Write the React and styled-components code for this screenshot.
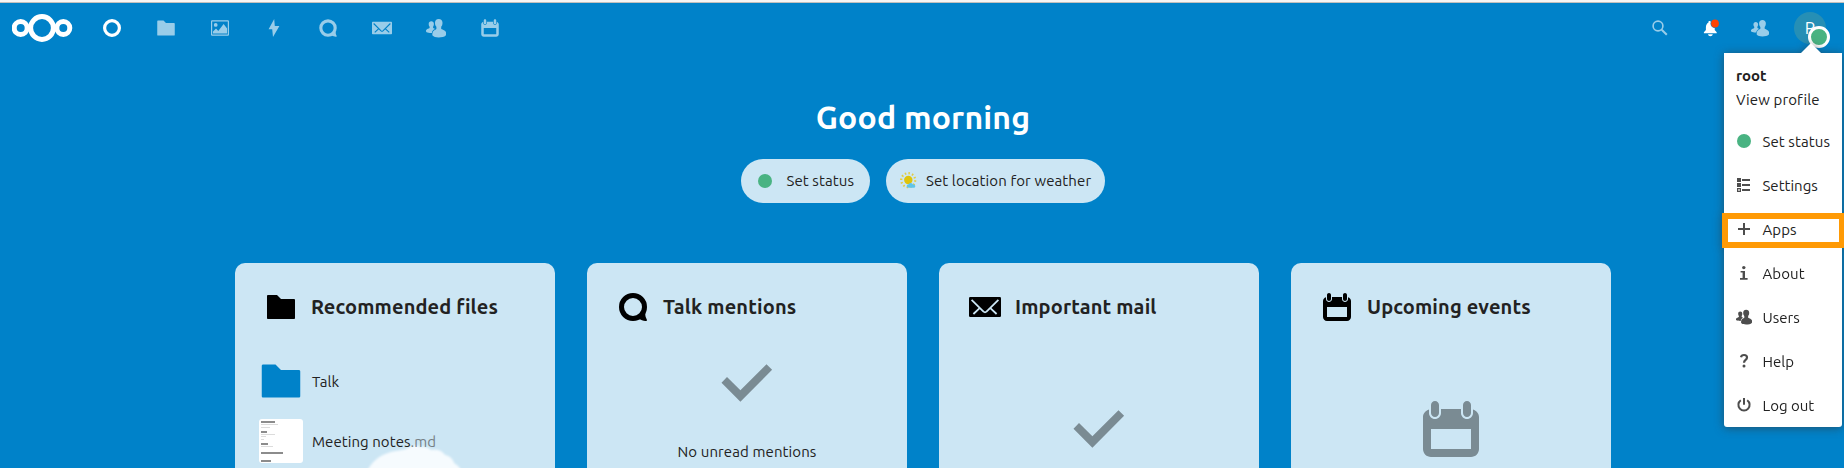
import React from 'react';
import styled, { createGlobalStyle } from 'styled-components';

const GlobalStyle = createGlobalStyle`
  * { box-sizing: border-box; }
  html, body { margin: 0; padding: 0; overflow: hidden; background: #0082c9; }
  body { font-family: "Ubuntu", "Noto Sans", "Open Sans", sans-serif; font-size: 15px; color: #222; }
  svg { display: block; flex: none; }
`;

const Page = styled.div`
  position: relative;
  display: flex;
  flex-direction: column;
  height: 468px;
  overflow: hidden;
  background: #0082c9;
  border-top: 2px solid #f6f5f4;
`;

const Header = styled.header`
  display: flex;
  align-items: center;
  flex: none;
  height: 51px;
  padding: 0 18px 0 12px;
  border-top: 1px solid #c3c0bd;
`;

const AppList = styled.nav`
  display: flex;
  margin-left: 11px;
`;

const AppItem = styled.a`
  display: flex;
  align-items: center;
  justify-content: center;
  width: 54px;
  height: 50px;
  color: #fff;
  opacity: ${(p) => (p.$active ? 1 : 0.6)};
`;

const HeaderTools = styled.div`
  display: flex;
  align-items: center;
  margin-left: auto;
`;

const ToolButton = styled.a`
  display: flex;
  align-items: center;
  justify-content: center;
  width: 50px;
  height: 50px;
  color: #fff;
  opacity: ${(p) => (p.$bright ? 1 : 0.6)};
`;

const Avatar = styled.div`
  position: relative;
  display: flex;
  align-items: center;
  justify-content: center;
  width: 32px;
  height: 32px;
  margin-left: 9px;
  border-radius: 50%;
  background: #268fb5;
  color: #fff;
  font-size: 17px;
  line-height: 32px;
`;

const AvatarStatus = styled.span`
  position: absolute;
  right: -4px;
  bottom: -4px;
  width: 22px;
  height: 22px;
  border: 3px solid #fff;
  border-radius: 50%;
  background: #49b382;
`;

const Greeting = styled.h1`
  margin: 42px 0 0;
  padding-left: 2px;
  text-align: center;
  font-size: 32px;
  line-height: 44px;
  font-weight: 700;
  letter-spacing: 0.15px;
  color: #fff;
`;

const PillRow = styled.div`
  display: flex;
  justify-content: center;
  gap: 16px;
  margin-top: 20px;
  padding-left: 2px;
`;

const Pill = styled.button`
  display: flex;
  align-items: center;
  width: ${(p) => p.$width}px;
  height: 44px;
  padding: 0 0 1px ${(p) => p.$inset}px;
  gap: ${(p) => p.$gap}px;
  border: 0;
  border-radius: 22px;
  background: #cce6f4;
  color: #222;
  font-family: inherit;
  font-size: 15px;
  white-space: nowrap;
`;

const Dot = styled.span`
  flex: none;
  width: 14px;
  height: 14px;
  border-radius: 50%;
  background: #49b382;
`;

const Label = styled.span`
  letter-spacing: ${(p) => p.$track ?? 0.1}px;
  white-space: nowrap;
`;

const Panels = styled.main`
  display: flex;
  justify-content: center;
  gap: 32px;
  margin-top: 60px;
  padding-left: 2px;
`;

const Panel = styled.section`
  position: relative;
  flex: none;
  width: 320px;
  height: 420px;
  border-radius: 10px;
  background: #cce6f4;
`;

const PanelHeading = styled.h2`
  display: flex;
  align-items: center;
  gap: 14px;
  height: 32px;
  margin: 28px 0 0 30px;
  font-size: 20px;
  line-height: 30px;
  font-weight: 700;
  svg { color: #000; }
`;

const FileRow = styled.div`
  position: relative;
  display: flex;
  align-items: center;
  gap: 8px;
  height: 60px;
  padding-left: 24px;
`;

const FileList = styled.div`
  margin-top: 28px;
`;

const FileIcon = styled.span`
  display: flex;
  align-items: center;
  width: 45px;
  height: 44px;
`;

const Extension = styled.span`
  color: #767f84;
`;

const Preview = styled.span`
  display: flex;
  flex-direction: column;
  width: 44px;
  height: 44px;
  margin-right: 1px;
  padding: 2px;
  overflow: hidden;
  border-radius: 3px;
  background: #fff;
`;

const PreviewLine = styled.i`
  flex: none;
  width: ${(p) => p.$w}px;
  height: ${(p) => (p.$strong ? 2 : 1)}px;
  margin-top: ${(p) => p.$top}px;
  background: ${(p) => (p.$strong ? '#8c8c8c' : '#dcdcdc')};
`;

const Cloud = styled.svg`
  position: absolute;
  left: 124px;
  top: 178px;
`;

const EmptyState = styled.div`
  display: flex;
  flex-direction: column;
  align-items: center;
  margin-top: ${(p) => p.$top}px;
  color: #222;
`;

const EmptyText = styled.p`
  margin: 39px 0 0;
  line-height: 22px;
`;

const MutedIcon = styled.span`
  color: #7a8b93;
`;

const Menu = styled.aside`
  position: absolute;
  top: 51px;
  right: 2px;
  width: 118px;
  height: 374px;
  border-radius: 0 0 3px 3px;
  background: #fff;
  filter: drop-shadow(0 1px 5px rgba(50, 50, 50, 0.6));
  &::before {
    content: '';
    position: absolute;
    top: -10px;
    right: 21px;
    border: 10.5px solid transparent;
    border-top: 0;
    border-bottom-color: #fff;
  }
`;

const MenuUser = styled.div`
  display: flex;
  flex-direction: column;
  height: 66px;
  padding: 11px 0 0 12px;
  line-height: 24px;
`;

const MenuItem = styled.a`
  position: relative;
  display: flex;
  align-items: center;
  gap: 10.5px;
  height: 44px;
  padding-left: 12px;
`;

const MenuIcon = styled.span`
  display: flex;
  align-items: center;
  justify-content: center;
  width: 16px;
  height: 16px;
  color: #4d4d4d;
`;

const Highlight = styled.span`
  position: absolute;
  left: -2px;
  right: -2px;
  top: 6px;
  height: 35px;
  border: 6px solid #ff9a05;
  border-right-width: 5px;
`;

const Logo = () => (
  <svg width="62" height="30" viewBox="0 0 62 30" fill="none" stroke="#fff">
    <circle cx="30" cy="15" r="11.4" strokeWidth="5" />
    <circle cx="8.7" cy="15" r="6.5" strokeWidth="5" />
    <circle cx="51.3" cy="15" r="6.5" strokeWidth="5" />
  </svg>
);

const RingIcon = () => (
  <svg width="20" height="20" viewBox="0 0 20 20" fill="none" stroke="currentColor" strokeWidth="3.2">
    <circle cx="10" cy="10" r="7.4" />
  </svg>
);

const FolderIcon = ({ size, color = 'currentColor' }) => (
  <svg width={size} height={size} viewBox="0 0 32 32" fill={color}>
    <path d="m3 4c-.5 0-1 .5-1 1v22c0 .52.48 1 1 1h26c.52 0 1-.48 1-1v-18c0-.5-.5-1-1-1h-13l-4-4z" />
  </svg>
);

const PictureIcon = () => (
  <svg width="20" height="20" viewBox="0 0 20 20">
    <rect x="1.6" y="2.9" width="16.8" height="14.3" rx=".5" fill="none" stroke="currentColor" strokeWidth="1.2" />
    <circle cx="5.7" cy="6.9" r="1.9" fill="currentColor" />
    <path d="M3 15.6v-2l3-3 2.3 2.4L13.6 6l3.5 4.4v5.2z" fill="currentColor" />
  </svg>
);

const BoltIcon = () => (
  <svg width="20" height="20" viewBox="0 0 20 20" fill="currentColor">
    <path d="M10.2 1 4.6 11.3h3.6L9 19l6.4-11h-4.6z" />
  </svg>
);

const TalkIcon = ({ size }) => (
  <svg width={size} height={size} viewBox="0 0 16 16">
    <circle cx="8" cy="8" r="5.75" fill="none" stroke="currentColor" strokeWidth="2.5" />
    <path d="M14.2 10.8c-.2 1.5.1 2.4.7 3.4.2.6-.1.9-.7.8-1.2-.1-2.2-.6-3.4-1z" fill="currentColor" />
  </svg>
);

const MailIcon = ({ size, cut }) => (
  <svg width={size} height={size} viewBox="0 0 32 32">
    <rect y="6" width="32" height="20" rx="1.2" fill="currentColor" />
    <path d="M2.6 8.8 14.5 20.6q1.5 1.2 3 0L29.4 8.8M4.4 23l6-5.6M27.6 23l-6-5.6" fill="none" stroke={cut} strokeWidth="1.8" />
  </svg>
);

const ContactsIcon = ({ size }) => (
  <svg width={size} height={size} viewBox="0 0 20 20" fill="currentColor">
    <path d="M5.3 3.2c1.6 0 2.6 1.1 2.6 2.7 0 1.3-.3 2-.8 2.7v1.5c.7.4 1.4.6 2 .9-1.9.7-3 1.8-3.2 4-2 .1-4.2-.2-5.3-.8-.8-.4-.8-1.7-.3-2.3.7-.9 2.3-1.3 3.3-1.9V8.6c-.6-.7-.9-1.4-.9-2.7 0-1.6 1-2.7 2.6-2.7z" />
    <path d="M12.7 1c2.3 0 3.8 1.5 3.8 3.8 0 1.9-.5 3.1-1.3 4v2.1c1.6.8 4.2 1.5 4.7 3.2.3 1.2.3 2.6-.2 3.4-1.3 1.4-4.2 1.9-7 1.9-3 0-5-.4-6.2-1.8-.4-1.2-.1-2.7.3-3.7.7-1.5 2.4-2.1 3.6-3V8.8c-.9-.9-1.4-2.1-1.4-4C9 2.5 10.4 1 12.7 1z" />
  </svg>
);

const CalendarIcon = ({ size }) => (
  <svg width={size} height={size} viewBox="0 0 16 16" fill="currentColor">
    <path d="M4 1c-.55 0-1 .45-1 1v2c0 .55.45 1 1 1s1-.45 1-1V2c0-.55-.45-1-1-1zm8 0c-.55 0-1 .45-1 1v2c0 .55.45 1 1 1s1-.45 1-1V2c0-.55-.45-1-1-1zM5.5 3v1c0 .83-.67 1.5-1.5 1.5S2.5 4.83 2.5 4v-.9C1.6 3.4 1 4.1 1 5v8c0 1.1.9 2 2 2h10c1.1 0 2-.9 2-2V5c0-.9-.6-1.6-1.5-1.9V4c0 .83-.67 1.5-1.5 1.5s-1.5-.67-1.5-1.5V3zM3 8h10v5H3z" fillRule="evenodd" />
  </svg>
);

const SearchIcon = () => (
  <svg width="18" height="18" viewBox="0 0 18 18" fill="none" stroke="currentColor" strokeWidth="1.6">
    <circle cx="7" cy="7" r="4.9" />
    <path d="M10.7 10.7 15.8 15.7" strokeWidth="2" />
  </svg>
);

const BellIcon = () => (
  <svg width="20" height="20" viewBox="0 0 20 20">
    <path d="M9.5 3c.9 0 1.5.6 1.5 1.4 2.5.7 3.7 2.6 3.7 5.1v2.6l2 2.2v.9H3.9v-.9l2-2.2V9.5c0-2.5 1-4.4 2.6-5.1C8.4 3.5 8.7 3 9.5 3zM8 16.3h4.8c-.2 1.3-1.2 2-2.4 2s-2.2-.7-2.4-2z" fill="#fff" />
    <circle cx="15" cy="5.5" r="4.5" fill="#0082c9" />
    <circle cx="15" cy="5.5" r="3.9" fill="#ff4402" />
  </svg>
);

const WeatherIcon = () => (
  <svg width="17" height="17" viewBox="0 0 17 17">
    <circle cx="8.2" cy="8.2" r="7" fill="none" stroke="#e2cc42" strokeWidth="2.2" strokeDasharray="1.5 2.165" />
    <circle cx="8.3" cy="8" r="4.2" fill="#dfc40c" />
    <path d="M8.700 15.700c-1.400 0-1.900-.7-1.900-1.600 0-1 .7-1.600 1.600-1.500.4-1.200 1.300-1.700 2.200-1.700 1 0 1.800.6 2.100 1.400 1.500-.1 2.500.7 2.600 1.900 0 .9-.6 1.500-1.600 1.500z" fill="#5fc4ea" />
  </svg>
);

const CheckIcon = () => (
  <svg width="52" height="38" viewBox="0 0 52 38" fill="#7a8b93">
    <path d="M.5 18.7 6 13.1l13.4 13.2L45.5.3l5.6 5.4-31.7 32z" />
  </svg>
);

const SettingsIcon = () => (
  <svg width="16" height="16" viewBox="0 0 16 16" fill="currentColor">
    <path d="M1 1h4v4H1zM6 2h8v2H6zM1 6h4v4H1zM6 7h8v2H6zM1 11h4v4H1zM2.2 12.2v1.6h1.6v-1.6zM6 12h8v2H6z" fillRule="evenodd" />
  </svg>
);

const PlusIcon = () => (
  <svg width="16" height="16" viewBox="0 0 16 16" fill="currentColor">
    <path d="M7 2h2v5h5v2H9v5H7V9H2V7h5z" />
  </svg>
);

const InfoIcon = () => (
  <svg width="16" height="16" viewBox="0 0 16 16" fill="currentColor">
    <circle cx="7.8" cy="2.6" r="1.7" />
    <path d="M4.6 6H9v7h2.6v1.8H4V13h2.6V7.6h-2z" />
  </svg>
);

const HelpIcon = () => (
  <svg width="16" height="16" viewBox="0 0 16 16">
    <path d="M5 4.3C5.3 2.7 6.5 2 8 2c1.8 0 3 .9 3 2.5 0 2.5-3 2.3-3 5.2" fill="none" stroke="currentColor" strokeWidth="2.2" />
    <circle cx="8" cy="13" r="1.5" fill="currentColor" />
  </svg>
);

const PowerIcon = () => (
  <svg width="16" height="16" viewBox="0 0 16 16" fill="none" stroke="currentColor" strokeWidth="2">
    <path d="M4.8 3.3a5.6 5.6 0 1 0 6.4 0M8 1v6.8" />
  </svg>
);

const apps = [
  { id: 'dashboard', icon: <RingIcon />, active: true },
  { id: 'files', icon: <FolderIcon size={20} /> },
  { id: 'photos', icon: <PictureIcon /> },
  { id: 'activity', icon: <BoltIcon /> },
  { id: 'talk', icon: <TalkIcon size={20} /> },
  { id: 'mail', icon: <MailIcon size={20} cut="#0082c9" /> },
  { id: 'contacts', icon: <ContactsIcon size={20} /> },
  { id: 'calendar', icon: <CalendarIcon size={20} /> },
];

const menuItems = [
  { label: 'Set status', icon: <Dot /> },
  { label: 'Settings', icon: <SettingsIcon />, track: 0 },
  { label: 'Apps', icon: <PlusIcon /> },
  { label: 'About', icon: <InfoIcon /> },
  { label: 'Users', icon: <ContactsIcon size={16} />, track: 0 },
  { label: 'Help', icon: <HelpIcon />, track: 0 },
  { label: 'Log out', icon: <PowerIcon />, track: 0 },
];

const previewLines = [
  [14, 0, true], [17, 1], [9, 2], [6, 3, true], [14, 1], [5, 1], [3, 2],
  [7, 3, true], [12, 1], [22, 5, true], [10, 6, true],
];

export default function App() {
  return (
    <Page>
      <GlobalStyle />
      <Header>
        <Logo />
        <AppList>
          {apps.map((a) => (
            <AppItem key={a.id} $active={a.active}>{a.icon}</AppItem>
          ))}
        </AppList>
        <HeaderTools>
          <ToolButton><SearchIcon /></ToolButton>
          <ToolButton $bright><BellIcon /></ToolButton>
          <ToolButton><ContactsIcon size={18} /></ToolButton>
          <Avatar>R<AvatarStatus /></Avatar>
        </HeaderTools>
      </Header>

      <Greeting>Good morning</Greeting>
      <PillRow>
        <Pill $width={129} $inset={17} $gap={14.5}>
          <Dot />
          <Label>Set status</Label>
        </Pill>
        <Pill $width={219} $inset={14} $gap={9}>
          <WeatherIcon />
          <Label>Set location for weather</Label>
        </Pill>
      </PillRow>

      <Panels>
        <Panel>
          <PanelHeading>
            <FolderIcon size={32} />
            <Label $track={0.13}>Recommended files</Label>
          </PanelHeading>
          <Cloud width="110" height="60" viewBox="0 0 110 60">
            <defs>
              <filter id="soft"><feGaussianBlur stdDeviation="0.9" /></filter>
            </defs>
            <path d="M7 32C12 22 19 15 29 12c7-3 13-2 18-4 5-3 9-5 14-2 5-1 9 1 11 3 6-1 11 0 14 5 5 1 8 4 9 8 5 3 8 7 9 12v24H7z" fill="#f6fbfe" filter="url(#soft)" />
          </Cloud>
          <FileList>
            <FileRow>
              <FileIcon><FolderIcon size={44} color="#0082c9" /></FileIcon>
              <Label $track={0}>Talk</Label>
            </FileRow>
            <FileRow>
              <Preview>
                {previewLines.map(([w, top, strong], i) => (
                  <PreviewLine key={i} $w={w} $top={top} $strong={strong} />
                ))}
              </Preview>
              <Label $track={0.06}>Meeting notes<Extension>.md</Extension></Label>
            </FileRow>
          </FileList>
        </Panel>
        <Panel>
          <PanelHeading>
            <TalkIcon size={32} />
            <Label $track={0.15}>Talk mentions</Label>
          </PanelHeading>
          <EmptyState $top={41}>
            <CheckIcon />
            <EmptyText><Label>No unread mentions</Label></EmptyText>
          </EmptyState>
        </Panel>
        <Panel>
          <PanelHeading>
            <MailIcon size={32} cut="#cce6f4" />
            <Label $track={0.15}>Important mail</Label>
          </PanelHeading>
          <EmptyState $top={87}>
            <CheckIcon />
          </EmptyState>
        </Panel>
        <Panel>
          <PanelHeading>
            <CalendarIcon size={32} />
            <Label $track={0.13}>Upcoming events</Label>
          </PanelHeading>
          <EmptyState $top={74}>
            <MutedIcon><CalendarIcon size={64} /></MutedIcon>
          </EmptyState>
        </Panel>
      </Panels>

      <Menu>
        <MenuUser>
          <b>root</b>
          <Label>View profile</Label>
        </MenuUser>
        {menuItems.map((m) => (
          <MenuItem key={m.label}>
            <MenuIcon>{m.icon}</MenuIcon>
            <Label $track={m.track}>{m.label}</Label>
            {m.label === 'Apps' && <Highlight />}
          </MenuItem>
        ))}
      </Menu>
    </Page>
  );
}
